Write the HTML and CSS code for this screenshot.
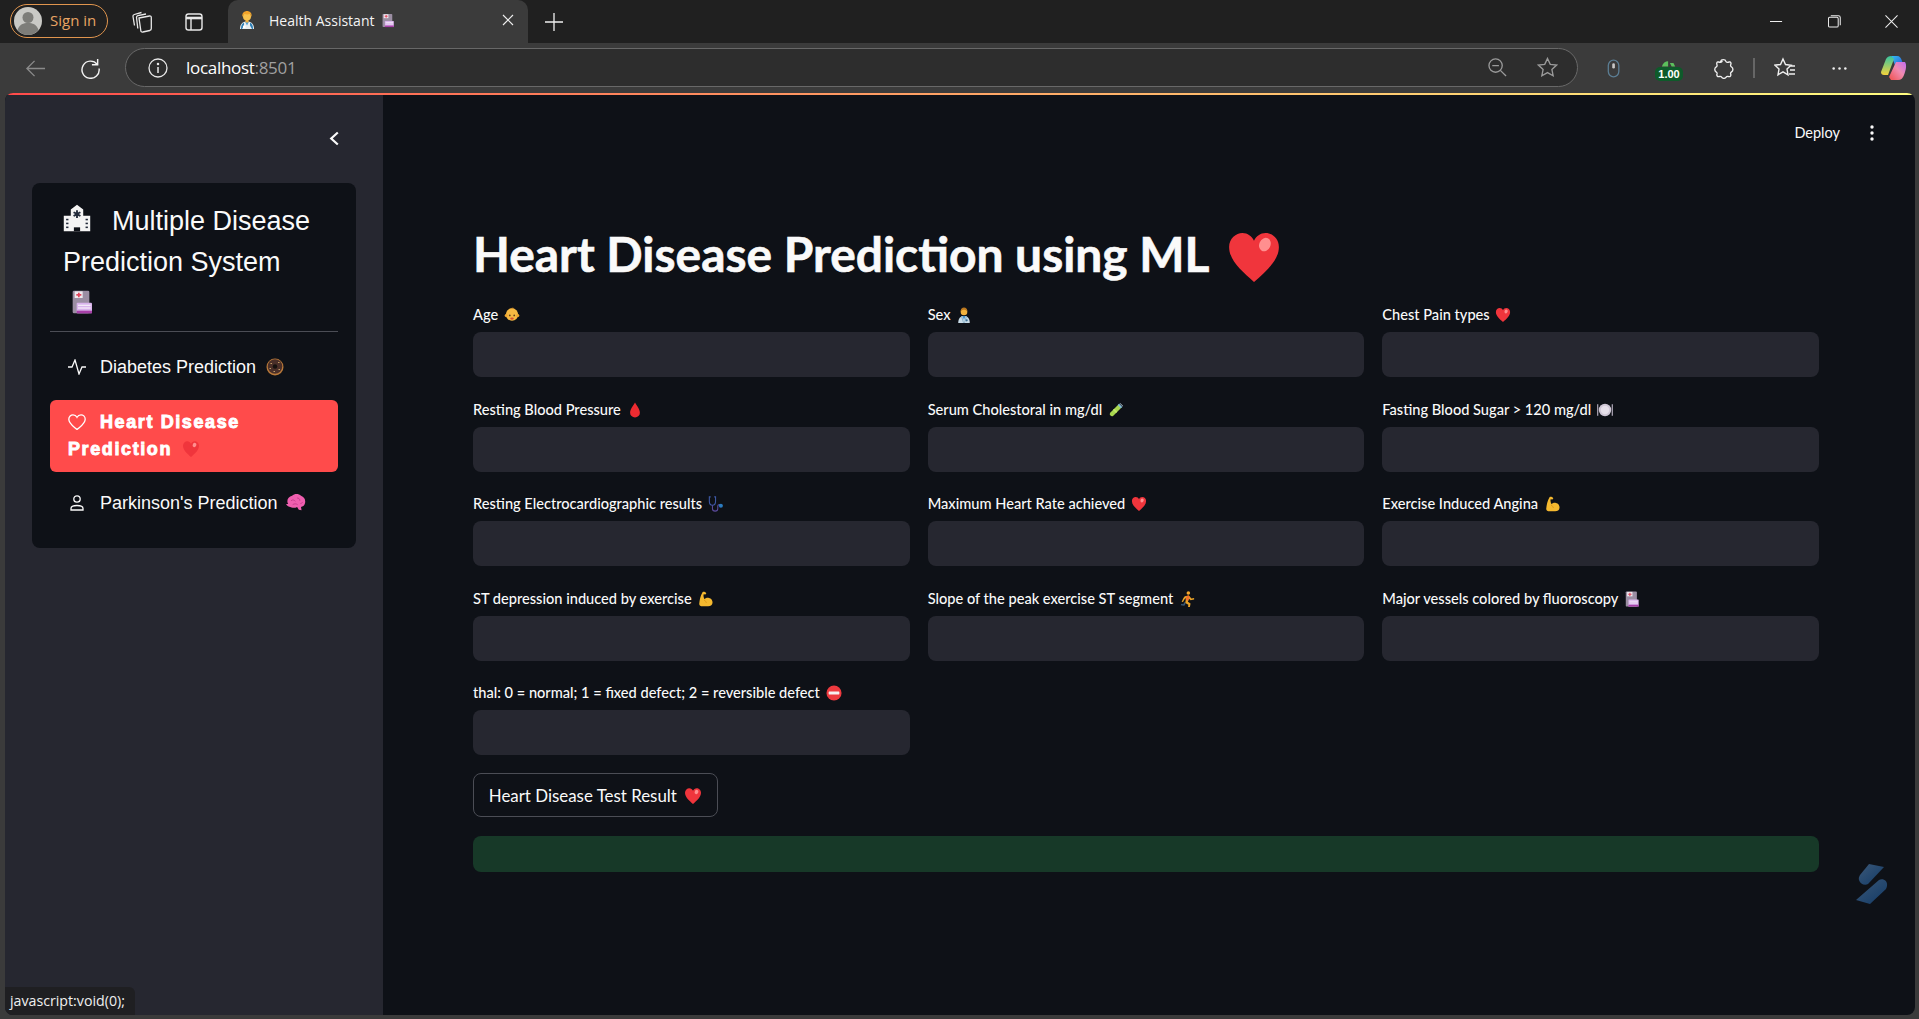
FILE: index.html
```html
<!DOCTYPE html>
<html lang="en">
<head>
<meta charset="utf-8">
<title>Health Assistant</title>
<link rel="stylesheet" href="styles.css">
</head>
<body>
<svg class="defs" width="0" height="0" aria-hidden="true">
  <defs>
    <linearGradient id="cop1" x1="0" y1="0" x2="1" y2="1"><stop offset="0" stop-color="#35c1f1"/><stop offset=".6" stop-color="#2b6fe0"/><stop offset="1" stop-color="#3d3bd6"/></linearGradient>
    <linearGradient id="cop2" x1="0" y1="1" x2="1" y2="0"><stop offset="0" stop-color="#f0504c"/><stop offset=".55" stop-color="#f08bb0"/><stop offset="1" stop-color="#c26cf0"/></linearGradient>
    <linearGradient id="cop3" x1="0" y1="0" x2="0" y2="1"><stop offset="0" stop-color="#36c4a0"/><stop offset="1" stop-color="#f4d23c"/></linearGradient>
    <linearGradient id="wm" x1="0" y1="0" x2="1" y2="1"><stop offset="0" stop-color="#3b5878"/><stop offset="1" stop-color="#123a66"/></linearGradient>
    <symbol id="heart" viewBox="0 0 36 36"><path fill="#f0353c" d="M18 34C10 27 2 20 2 11.500 2 6 6.500 2.500 10.500 2.500c3.500 0 6 2 7.500 5 1.500-3 4-5 7.500-5C29.500 2.500 34 6 34 11.500 34 20 26 27 18 34z"/><ellipse cx="25" cy="10" rx="3.600" ry="4.500" fill="#ff8f8f" transform="rotate(25 25 10)"/></symbol>
    <symbol id="baby" viewBox="0 0 36 36"><circle cx="18" cy="17" r="14" fill="#f7b942"/><circle cx="5" cy="19" r="3.500" fill="#f0a730"/><circle cx="31" cy="19" r="3.500" fill="#f0a730"/><circle cx="13" cy="19" r="2" fill="#62401e"/><circle cx="23" cy="19" r="2" fill="#62401e"/><ellipse cx="18" cy="26" rx="4" ry="2.500" fill="#d8502e"/><path d="M14 4c3-3 8-3 9 0-3-1-6-1-9 0z" fill="#e89b24"/></symbol>
    <symbol id="doctor" viewBox="0 0 36 36"><path d="M5 36c0-11 5-16 13-16s13 5 13 16z" fill="#c9dce8"/><path d="M15 20h6l-3 9z" fill="#3d8fc9"/><path d="M14 20l4 16 4-16 3 1-5 15h-4L11 21z" fill="#8fb4cc"/><circle cx="18" cy="11" r="7.500" fill="#f3b23c"/><path d="M10.500 10c0-6 3-9 7.500-9s7.500 3 7.500 9c-2-3-4-4-7.500-4s-5.500 1-7.500 4z" fill="#b8761f"/><circle cx="24" cy="30" r="2.500" fill="#3d6f96"/></symbol>
    <symbol id="worker" viewBox="0 0 36 36"><path d="M4 36c0-10 5-15 14-15s14 5 14 15z" fill="#e8edf0"/><path d="M14 21l4 8 4-8z" fill="#4b9bd4"/><path d="M6 36c0-8 2-11 6-13v6l-4 7zM30 36c0-8-2-11-6-13v6l4 7z" fill="#2e7eb5"/><rect x="10" y="29" width="5" height="5" rx="1" fill="#fff"/><rect x="15" y="15" width="6" height="8" fill="#f1ab3b"/><circle cx="18" cy="11" r="8" fill="#f8c24e"/><path d="M9 12C7 4 13 0 18 0s11 4 9 12c-1-4-2-5-3-6-4 1-8 1-11 0-1 1-3 2-4 6z" fill="#f2a32a"/></symbol>
    <symbol id="floppy" viewBox="0 0 36 36"><rect x="4" y="1" width="25" height="34" rx="2" fill="#9b8ea3"/><rect x="7" y="2" width="12" height="10" fill="#efe9ee"/><path d="M12 4h2.500v2H17v2.500h-2.500V11H12V8.500H9.500V6H12z" fill="#e2445c"/><rect x="10" y="19" width="23" height="16" rx="1.500" fill="#d9b4ec"/><rect x="12" y="22" width="19" height="2" fill="#f3e9f8"/><rect x="12" y="26" width="19" height="2" fill="#f3e9f8"/><rect x="10" y="31" width="23" height="4" fill="#a740a8"/></symbol>
    <symbol id="hospital" viewBox="0 0 36 36"><path d="M1 35V15h9V7l8-6 8 6v8h9v20z" fill="#f4f4f4"/><rect x="14" y="30" width="8" height="5" fill="#0e1117"/><path d="M16.800 8h2.400v3l2.600-1.500 1.200 2-2.600 1.500 2.600 1.500-1.200 2-2.600-1.500v3h-2.400v-3l-2.600 1.500-1.200-2 2.600-1.500-2.600-1.500 1.200-2 2.600 1.500z" fill="#222a3a"/><g fill="#222a3a"><rect x="4" y="19" width="3" height="2"/><rect x="4" y="24" width="3" height="2"/><rect x="4" y="29" width="3" height="2"/><rect x="29" y="19" width="3" height="2"/><rect x="29" y="24" width="3" height="2"/><rect x="29" y="29" width="3" height="2"/></g></symbol>
    <symbol id="drop" viewBox="0 0 36 36"><path d="M18 1c5 9 11 15 11 23a11 11 0 0 1-22 0C7 16 13 10 18 1z" fill="#ee2b31"/></symbol>
    <symbol id="tube" viewBox="0 0 36 36"><path d="M24 5l7 7-19 19a5 5 0 0 1-7-7z" fill="#a9d84f"/><path d="M22 7l3-3 7 7-3 3z" fill="#7fb7dd"/><path d="M26 3l7 7 1-1-7-7z" fill="#c9e4f2"/><path d="M14 15l7 7-3 3-7-7z" fill="#c4ea6b"/></symbol>
    <symbol id="plate" viewBox="0 0 36 36"><circle cx="18" cy="18" r="14" fill="#cfc7d6"/><circle cx="18" cy="18" r="9.500" fill="#e6e0ea"/><rect x="0" y="5" width="3" height="26" fill="#9f99a8"/><rect x="33" y="5" width="3" height="26" fill="#9f99a8"/></symbol>
    <symbol id="steth" viewBox="0 0 36 36"><path d="M6 2H3v10c0 6 3 9 7 9s7-3 7-9V2h-3" fill="none" stroke="#3f5aa8" stroke-width="2.400"/><path d="M10 21v7c0 4 3 6 6 6s6-2 6-6v-5c0-2 2-4 5-4" fill="none" stroke="#5b4a9c" stroke-width="2.400"/><circle cx="29" cy="22" r="4.500" fill="#2b7cc0"/></symbol>
    <symbol id="muscle" viewBox="0 0 36 36"><path d="M13 2c3-1 6 0 8 3l-2 3-4-.5c-1 4 0 8 2 11 2-3 6-4 10-3 5 1 8 5 8 10 0 6-4 9-10 9H13c-5 0-8-2-8-6 1-8 2-17 8-27z" fill="#f5b92f"/><path d="M16 21c3 1 5 3 5 6" fill="none" stroke="#d98f14" stroke-width="1.600"/></symbol>
    <symbol id="runner" viewBox="0 0 36 36"><circle cx="21" cy="4.500" r="4" fill="#f4a72c"/><path d="M13 12l9-2 6 7 6-1v3l-8 2-4-4-2 7 6 4-2 11h-4l1-8-7-4 2-11-4 3-3 6-3-1 4-8z" fill="#e9a329"/><path d="M17 11l5-1 2 3-3 9-6-2z" fill="#f1702a"/><path d="M15 28l-3 5-8-1 1-3 5 1 2-5z" fill="#3a5a78"/></symbol>
    <symbol id="noentry" viewBox="0 0 36 36"><circle cx="18" cy="18" r="17" fill="#ee3a3f"/><rect x="6" y="14.500" width="24" height="7" rx="1" fill="#f5f0f0"/></symbol>
    <symbol id="donut" viewBox="0 0 36 36"><circle cx="18" cy="18" r="17" fill="#b9793a"/><circle cx="18" cy="17" r="14.500" fill="#4a2f28"/><circle cx="18" cy="17" r="4.500" fill="#16120f"/><g fill="#e8c07a"><rect x="9" y="10" width="3" height="1.500"/><rect x="24" y="8" width="3" height="1.500"/><rect x="7" y="20" width="3" height="1.500"/><rect x="25" y="22" width="3" height="1.500"/><rect x="15" y="26" width="3" height="1.500"/></g></symbol>
    <symbol id="brain" viewBox="0 0 36 36"><path d="M4 20C0 14 4 6 11 5c4-4 12-4 16 0 6 2 9 8 7 14-1 4-4 6-7 6l1 6-5-1-3-5c-3 2-7 2-10 1-3 0-8-2-10-6z" fill="#f05fb0"/><path d="M9 14c3-3 6-1 8 1M20 9c3 0 5 2 5 5M12 21c3-2 6-2 9 0M26 19c2 0 3-1 4-3" fill="none" stroke="#c23a88" stroke-width="1.500"/></symbol>
  </defs>
</svg>

<div class="tabstrip">
  <div class="signin">
    <svg class="avatar" viewBox="0 0 28 28"><circle cx="14" cy="14" r="14" fill="#c9c9c5"/><circle cx="14" cy="10.500" r="5.500" fill="#7d7d79"/><path d="M3.500 23c2-6 6-7 10.500-7s8.500 1 10.500 7A14 14 0 0 1 14 28 14 14 0 0 1 3.500 23z" fill="#7d7d79"/></svg>
    <span>Sign in</span>
  </div>
  <svg class="chrome-ico tabs-ico" viewBox="0 0 22 22" fill="none" stroke="#e8e8e8" stroke-width="1.300"><path d="M8.500 7.500l10.500-2c1-.2 1.800.5 1.800 1.500v11c0 1-.6 1.700-1.500 2l-7 1.500c-1.200.2-2-.5-2-1.500z" transform="translate(-.5 -.5)"/><path d="M6.800 17.500L5.500 6.500c-.1-1 .4-1.700 1.300-1.900L15 3"/><path d="M3.500 14.500L2 5.500c-.2-1 .3-1.700 1.300-2L10.500 1.500"/></svg>
  <svg class="chrome-ico vert-ico" viewBox="0 0 22 22" fill="none" stroke="#e8e8e8" stroke-width="1.400"><rect x="3" y="3" width="16" height="16" rx="2.500"/><path d="M3 7h16" stroke-width="2.600"/><path d="M8 7v12"/></svg>
  <div class="tab">
    <svg class="tab-fav"><use href="#worker"/></svg>
    <span class="tab-title">Health Assistant</span>
    <svg class="tab-floppy"><use href="#floppy"/></svg>
    <svg class="tab-close" viewBox="0 0 12 12" stroke="#eee" stroke-width="1.200"><path d="M1 1l10 10M11 1L1 11"/></svg>
  </div>
  <svg class="tab-new" viewBox="0 0 18 18" stroke="#f0f0f0" stroke-width="1.300"><path d="M9 0v18M0 9h18"/></svg>
  <div class="winctl">
    <svg class="win-ico" viewBox="0 0 14 14" stroke="#eee" stroke-width="1.100"><path d="M0 7h13"/></svg>
    <svg class="win-ico" viewBox="0 0 14 14" fill="none" stroke="#eee" stroke-width="1.100"><rect x=".5" y="2.500" width="10.500" height="10.500" rx="1.500"/><path d="M3 .8h8.200c1 0 2 1 2 2V11"/></svg>
    <svg class="win-ico" viewBox="0 0 14 14" stroke="#eee" stroke-width="1.100"><path d="M.5.500l13 13M13.500.500l-13 13"/></svg>
  </div>
</div>

<div class="toolbar">
  <svg class="tool back" viewBox="0 0 22 22" fill="none" stroke="#8a8a8a" stroke-width="1.400"><path d="M21 11H2M10 3l-8 8 8 8"/></svg>
  <svg class="tool reload" viewBox="0 0 22 22" fill="none" stroke="#f2f2f2" stroke-width="1.500"><path d="M18 6.500A9 9 0 1 0 20 11"/><path d="M18.500 1v6h-6"/></svg>
  <div class="address">
    <svg class="addr-info" viewBox="0 0 20 20" fill="none" stroke="#e8e8e8" stroke-width="1.300"><circle cx="10" cy="10" r="9"/><path d="M10 9v6" stroke-width="1.500"/><circle cx="10" cy="6" r=".6" fill="#e8e8e8"/></svg>
    <span class="url">localhost<span class="port">:8501</span></span>
    <svg class="addr-zoom" viewBox="0 0 20 20" fill="none" stroke="#9a9a9a" stroke-width="1.400"><circle cx="8" cy="8" r="7"/><path d="M4.500 8h7M13 13l6 6"/></svg>
    <svg class="addr-star" viewBox="0 0 22 22" fill="none" stroke="#9a9a9a" stroke-width="1.400"><path d="M11 1.500l2.900 6.200 6.600.8-4.900 4.500 1.300 6.600L11 16.300l-5.900 3.300 1.300-6.600L1.500 8.500l6.600-.8z"/></svg>
  </div>
  <svg class="tool ext-mouse" viewBox="0 0 16 22" fill="none" stroke="#5b7d93" stroke-width="1.500"><rect x="1.500" y="1.500" width="12" height="19" rx="6"/><rect x="6" y="5" width="3" height="6" rx="1.500" fill="#c8c8c8" stroke="none"/></svg>
  <div class="ext-speed">
    <svg class="speed-arc" viewBox="0 0 18 8"><path d="M1 8c1-4 4-6 7-6v6zM10 4h4l2 4h-4z" fill="#5cc05c"/></svg>
    <span class="speed-badge">1.00</span>
  </div>
  <svg class="tool puzzle" viewBox="0 0 22 22" fill="none" stroke="#f0f0f0" stroke-width="1.400"><path d="M8 3.500C8.500 1 13 1 13.500 3.500c.3 1.500 2.500 1 3.500.7 1.800-.4 2.200 1.200 1.500 3-.5 1.300.3 1.800 1 2.300 1.800 1.300 1.800 3.700 0 5-1 .7-1.500 1-1 2.300.6 1.700-.5 3-2 2.700-1.300-.2-2-.6-2.700.5-1.200 1.800-3.600 1.800-4.800 0-.7-1.100-1.500-.7-2.800-.5-1.500.2-2.600-1-2-2.700.4-1.300 0-1.700-1-2.300-1.800-1.300-1.800-3.700 0-5 1-.6 1.400-1 1-2.300-.6-1.800-.3-3.400 1.500-3 1.100.3 3.500.8 3.800-.7z"/></svg>
  <span class="tool-sep"></span>
  <svg class="tool favs" viewBox="0 0 22 22" fill="none" stroke="#f0f0f0" stroke-width="1.400"><path d="M9 2l2.500 5.500 5.500.7-4 3.800 1 5.800-5-2.900-5 2.900 1-5.800-4-3.800 5.500-.7zM15 9h6M16 13h5M15 17h6"/></svg>
  <svg class="tool more" viewBox="0 0 20 6" fill="#f0f0f0"><circle cx="3" cy="3" r="1.500"/><circle cx="10" cy="3" r="1.500"/><circle cx="17" cy="3" r="1.500"/></svg>
  <svg class="tool copilot" viewBox="0 0 28 28"><path d="M12 2h6c3 0 4 2 5 5l3 10h-8L14 6z" fill="url(#cop1)"/><path d="M2 18L7 5c1-2 3-3 5-3l3 3-6 16H5c-2 0-3-1-3-3z" fill="url(#cop3)"/><path d="M26 8c2 3 1 8-1 13-1 3-3 5-6 5h-7l-2-3 7-15z" fill="url(#cop2)"/></svg>
</div>

<div class="viewport">
  <div class="decoration"></div>
  <div class="app">
    <aside class="sidebar">
      <div class="side-head">
        <svg class="collapse" viewBox="0 0 10 14" fill="none" stroke="#fafafa" stroke-width="2"><path d="M8 1.500L2 7l6 5.500"/></svg>
      </div>
      <nav class="menu-card">
        <div class="menu-title"><svg class="emo-h"><use href="#hospital"/></svg><span class="title-gap"></span>Multiple Disease Prediction System <svg class="emo-f"><use href="#floppy"/></svg></div>
        <hr class="menu-rule">
        <ul class="menu-list">
          <li class="menu-item">
            <svg class="menu-ico" viewBox="0 0 18 16" fill="none" stroke="#fafafa" stroke-width="1.300"><path d="M0 8h4l3-7 4 14 3-7h4"/></svg>
            <span class="menu-text">Diabetes Prediction</span> <svg class="emo-m"><use href="#donut"/></svg>
          </li>
          <li class="menu-item active">
            <svg class="menu-ico" viewBox="0 0 18 16" fill="none" stroke="#fff" stroke-width="1.300"><path d="M9 15.500C5 12 .8 9.500.8 5.200.8 2.500 3 .8 5 .8 6.800.8 8.200 1.800 9 3.300 9.800 1.800 11.200.8 13 .8c2 0 4.200 1.700 4.200 4.400C17.200 9.500 13 12 9 15.500z"/></svg>
            <span class="menu-text">Heart Disease Prediction</span> <svg class="emo-m"><use href="#heart"/></svg>
          </li>
          <li class="menu-item">
            <svg class="menu-ico" viewBox="0 0 18 16" fill="none" stroke="#fafafa" stroke-width="1.300"><circle cx="9" cy="4" r="3.200"/><path d="M3 15v-1.500c0-2 2-3 6-3s6 1 6 3V15z"/></svg>
            <span class="menu-text">Parkinson's Prediction</span> <svg class="emo-m brain-ico"><use href="#brain"/></svg>
          </li>
        </ul>
      </nav>
    </aside>
    <main class="main">
      <header class="topbar">
        <span class="deploy">Deploy</span>
        <svg class="kebab" viewBox="0 0 6 16" fill="#fafafa"><circle cx="3" cy="2" r="1.700"/><circle cx="3" cy="8" r="1.700"/><circle cx="3" cy="14" r="1.700"/></svg>
      </header>
      <section class="content">
        <h1 class="page-title">Heart Disease Prediction using ML <svg class="emo-t"><use href="#heart"/></svg></h1>
        <div class="form-grid">
          <div class="field"><label class="lbl">Age <svg class="emo"><use href="#baby"/></svg></label><input class="inp"></div>
          <div class="field"><label class="lbl">Sex <svg class="emo"><use href="#doctor"/></svg></label><input class="inp"></div>
          <div class="field"><label class="lbl">Chest Pain types <svg class="emo"><use href="#heart"/></svg></label><input class="inp"></div>
          <div class="field"><label class="lbl">Resting Blood Pressure <svg class="emo"><use href="#drop"/></svg></label><input class="inp"></div>
          <div class="field"><label class="lbl">Serum Cholestoral in mg/dl <svg class="emo"><use href="#tube"/></svg></label><input class="inp"></div>
          <div class="field"><label class="lbl">Fasting Blood Sugar &gt; 120 mg/dl <svg class="emo"><use href="#plate"/></svg></label><input class="inp"></div>
          <div class="field"><label class="lbl">Resting Electrocardiographic results <svg class="emo"><use href="#steth"/></svg></label><input class="inp"></div>
          <div class="field"><label class="lbl">Maximum Heart Rate achieved <svg class="emo"><use href="#heart"/></svg></label><input class="inp"></div>
          <div class="field"><label class="lbl">Exercise Induced Angina <svg class="emo"><use href="#muscle"/></svg></label><input class="inp"></div>
          <div class="field"><label class="lbl">ST depression induced by exercise <svg class="emo"><use href="#muscle"/></svg></label><input class="inp"></div>
          <div class="field"><label class="lbl">Slope of the peak exercise ST segment <svg class="emo"><use href="#runner"/></svg></label><input class="inp"></div>
          <div class="field"><label class="lbl">Major vessels colored by fluoroscopy <svg class="emo"><use href="#floppy"/></svg></label><input class="inp"></div>
          <div class="field"><label class="lbl">thal: 0 = normal; 1 = fixed defect; 2 = reversible defect <svg class="emo"><use href="#noentry"/></svg></label><input class="inp"></div>
        </div>
        <button class="result-btn">Heart Disease Test Result <svg class="emo-b"><use href="#heart"/></svg></button>
        <div class="success-bar"></div>
      </section>
    </main>
  </div>
  <svg class="watermark" viewBox="0 0 32 42"><path d="M13 1l15 3-16 17c-3 2-8 0-9-4-.500-2 0-3 1-5z" fill="url(#wm)"/><path d="M23 17c4-2 9 1 8 6-.200 1-.500 2-1 3L14 41 0 37z" fill="url(#wm)"/></svg>
  <div class="status">javascript:void(0);</div>
</div>
</body>
</html>
```

FILE: styles.css
```css
* { box-sizing: border-box; }
html, body { height: 100%; }
body {
  margin: 0;
  width: 1919px;
  height: 1019px;
  overflow: hidden;
  display: flex;
  flex-direction: column;
  background: #3b3b3b;
  color: #fafafa;
  font-family: "Lato", "Noto Sans", sans-serif;
}
.defs { position: absolute; }

/* browser chrome */
.tabstrip {
  height: 43px;
  background: #202020;
  display: flex;
  align-items: center;
  flex: none;
  padding-left: 10px;
}
.signin {
  width: 98px;
  height: 34px;
  margin-bottom: 1px;
  border: 1.500px solid #e0954e;
  border-radius: 17px;
  display: flex;
  align-items: center;
  gap: 8px;
  padding: 0 0 0 3px;
  color: #e8a464;
  font: 15px "Open Sans", sans-serif;
}
.signin span { padding-bottom: 2px; }
.avatar { width: 28px; height: 28px; }
.chrome-ico { width: 22px; height: 22px; }
.tabs-ico { margin-left: 23px; }
.vert-ico { margin-left: 30px; }
.tab {
  margin-left: 23px;
  width: 300px;
  height: 43px;
  background: #3b3b3b;
  border-radius: 10px 10px 0 0;
  display: flex;
  align-items: center;
  padding: 0 0 3px 10px;
  color: #f4f4f4;
  font: 14px "Open Sans", sans-serif;
}
.tab-fav { width: 18px; height: 22px; margin-right: 13px; }
.tab-title { white-space: nowrap; }
.tab-floppy { width: 14px; height: 17px; margin-left: 7px; }
.tab-close { width: 12px; height: 12px; margin-left: auto; margin-right: 14px; }
.tab-new { width: 18px; height: 18px; margin-left: 17px; }
.winctl { margin-left: auto; display: flex; align-items: center; gap: 44.500px; padding-right: 21px; }
.win-ico { width: 13px; height: 13px; }

.toolbar {
  height: 50px;
  flex: none;
  background: #3b3b3b;
  display: flex;
  align-items: center;
  padding-left: 25px;
}
.tool { flex: none; }
.back { width: 21px; height: 21px; }
.reload { width: 21px; height: 21px; margin-left: 34px; }
.address {
  width: 1453px;
  height: 39px;
  margin: -1px 0 0 24px;
  border: 1.500px solid #686868;
  border-radius: 20px;
  background: #2d2d2d;
  display: flex;
  align-items: center;
  padding-left: 22px;
}
.addr-info { width: 20px; height: 20px; }
.url { margin-left: 18px; font: 17px "Open Sans", sans-serif; color: #fff; letter-spacing: -.3px; padding-bottom: 1px; }
.port { color: #a0a0a0; }
.addr-zoom { width: 19px; height: 19px; margin-left: auto; }
.addr-star { width: 21px; height: 21px; margin-left: 30px; margin-right: 19px; }
.ext-mouse { width: 14px; height: 21px; margin-left: 29px; }
.ext-speed { width: 28px; margin-left: 34px; display: flex; flex-direction: column; align-items: center; position: relative; top: 2px; }
.speed-arc { width: 16px; height: 8px; }
.speed-badge {
  width: 28px;
  height: 14px;
  background: #0e5a2a;
  border-radius: 5px;
  font: bold 11px/14px "Liberation Sans", sans-serif;
  text-align: center;
  color: #fff;
}
.puzzle { width: 21px; height: 21px; margin-left: 30px; }
.tool-sep { width: 1.500px; height: 20px; background: #666; margin-left: 19px; flex: none; }
.favs { width: 22px; height: 22px; margin-left: 19px; }
.more { width: 17px; height: 5px; margin-left: 35px; }
.copilot { width: 28px; height: 28px; margin-left: 31px; }

/* viewport */
.viewport {
  flex: none;
  height: 922px;
  margin: 0 4px 4px 5px;
  display: flex;
  flex-direction: column;
  position: relative;
  border-radius: 8px;
  overflow: hidden;
  background: #0e1117;
}
.decoration {
  height: 2px;
  flex: none;
  background: linear-gradient(90deg, #ff4b4b, #fffd80);
}
.app { flex: 1; display: flex; min-height: 0; }
.sidebar {
  width: 378px;
  flex: none;
  background: #262730;
  padding: 0 27px;
}
.side-head {
  height: 88px;
  display: flex;
  justify-content: flex-end;
  align-items: flex-start;
  padding: 35px 16px 0 0;
}
.collapse { width: 11px; height: 17px; }

.menu-card {
  background: #0e1117;
  border-radius: 8px;
  padding: 18px 18px 22px;
  font-family: "Liberation Sans", Arial, sans-serif;
}
.menu-title {
  font-size: 27px;
  line-height: 41px;
  padding-left: 13px;
  color: #fafafa;
}
.emo-h { width: 28px; height: 28px; vertical-align: -2px; }
.title-gap { display: inline-block; width: 21px; }
.emo-f { display: block; width: 24px; height: 28px; margin: 5px 0 8px 7px; }
.menu-rule {
  border: 0;
  border-top: 1px solid #4b4d55;
  margin: 15px 0 13px;
}
.menu-list {
  list-style: none;
  margin: 0;
  padding: 0;
  display: flex;
  flex-direction: column;
  gap: 9.500px;
}
.menu-item {
  font-size: 18px;
  line-height: 27px;
  padding: 9px 18px;
  border-radius: 6px;
  color: #fafafa;
}
.menu-ico { width: 18px; height: 16px; margin-right: 9px; vertical-align: -2px; }
.emo-m { width: 18px; height: 18px; vertical-align: -3px; margin-left: 5px; }
.brain-ico { width: 20px; height: 20px; margin-left: 3px; vertical-align: -4px; }
.active {
  background: #ff4b4b;
  color: #fff;
  font-weight: 700;
  padding-right: 30px;
}
.active .menu-text {
  -webkit-text-stroke: .9px #fff;
  letter-spacing: 1.600px;
}

.main { flex: 1; min-width: 0; display: flex; flex-direction: column; }
.topbar {
  height: 75px;
  flex: none;
  display: flex;
  align-items: center;
  justify-content: flex-end;
  gap: 29px;
  padding: 0 40px 0 0;
  font-size: 14.500px;
  color: #fafafa;
}
.kebab { width: 6px; height: 16px; }
.content { padding: 0 96px 0 90px; }
.page-title {
  margin: 50px 0 16px;
  height: 68px;
  font-size: 47.900px;
  line-height: 68px;
  font-weight: 700;
  -webkit-text-stroke: .6px #fafafa;
  color: #fafafa;
  white-space: nowrap;
}
.emo-t { width: 56px; height: 56px; vertical-align: -13px; margin-left: 6px; }
.form-grid {
  display: grid;
  grid-template-columns: repeat(3, 1fr);
  column-gap: 18px;
  row-gap: 21.500px;
}
.field { display: flex; flex-direction: column; gap: 7px; }
.lbl {
  font-size: 14.600px;
  line-height: 21px;
  font-weight: 500;
  color: #fafafa;
  white-space: nowrap;
}
.emo { width: 16px; height: 16px; vertical-align: -3px; margin-left: 2px; }
.inp {
  height: 45px;
  background: #262730;
  border: 0;
  border-radius: 8px;
  width: 100%;
}
.result-btn {
  display: block;
  margin-top: 18px;
  width: 245px;
  height: 44px;
  background: #0e1117;
  border: 1px solid #4b4d55;
  border-radius: 8px;
  color: #fafafa;
  font: 16.900px "Lato", sans-serif;
  padding: 0;
  white-space: nowrap;
}
.emo-b { width: 18px; height: 18px; vertical-align: -3px; margin-left: 3px; }
.success-bar {
  margin-top: 19px;
  height: 36px;
  border-radius: 8px;
  background: #173928;
}

.watermark { position: absolute; left: 1851px; top: 770px; width: 32px; height: 42px; }
.status {
  position: absolute;
  left: 0;
  bottom: 0;
  height: 28px;
  width: 130px;
  background: #1f1f22;
  border-radius: 0 6px 0 0;
  font: 14.200px/28px "Open Sans", sans-serif;
  color: #f0f0f0;
  padding-left: 5px;
}
```
